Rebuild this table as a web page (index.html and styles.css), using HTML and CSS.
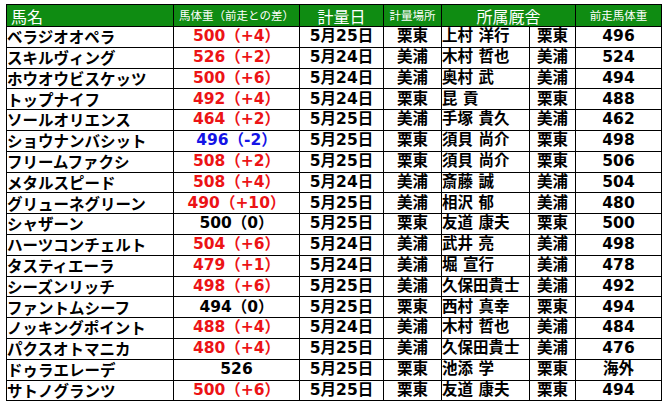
FILE: index.html
```html
<!DOCTYPE html>
<html lang="ja">
<head>
<meta charset="utf-8">
<title>馬体重</title>
<link rel="stylesheet" href="styles.css">
</head>
<body>
<div class="wrap">
<table class="sheet">
  <colgroup>
    <col class="c-name"><col class="c-wt"><col class="c-date"><col class="c-place"><col class="c-trainer"><col class="c-region"><col class="c-prev">
  </colgroup>
  <thead>
    <tr class="head">
      <th class="h-name">馬名</th>
      <th class="h-small">馬体重（前走との差）</th>
      <th class="h-big">計量日</th>
      <th class="h-small">計量場所</th>
      <th class="h-mid" colspan="2">所属厩舎</th>
      <th class="h-small">前走馬体重</th>
    </tr>
  </thead>
  <tbody>
    <tr><td class="name">ベラジオオペラ</td><td class="wt up">500（+4）</td><td class="ctr">5月25日</td><td class="ctr">栗東</td><td class="trainer">上村 洋行</td><td class="ctr">栗東</td><td class="ctr">496</td></tr>
    <tr><td class="name">スキルヴィング</td><td class="wt up">526（+2）</td><td class="ctr">5月24日</td><td class="ctr">美浦</td><td class="trainer">木村 哲也</td><td class="ctr">美浦</td><td class="ctr">524</td></tr>
    <tr><td class="name">ホウオウビスケッツ</td><td class="wt up">500（+6）</td><td class="ctr">5月24日</td><td class="ctr">美浦</td><td class="trainer">奥村 武</td><td class="ctr">美浦</td><td class="ctr">494</td></tr>
    <tr><td class="name">トップナイフ</td><td class="wt up">492（+4）</td><td class="ctr">5月24日</td><td class="ctr">栗東</td><td class="trainer">昆 貢</td><td class="ctr">栗東</td><td class="ctr">488</td></tr>
    <tr><td class="name">ソールオリエンス</td><td class="wt up">464（+2）</td><td class="ctr">5月25日</td><td class="ctr">美浦</td><td class="trainer">手塚 貴久</td><td class="ctr">美浦</td><td class="ctr">462</td></tr>
    <tr><td class="name">ショウナンバシット</td><td class="wt down">496（-2）</td><td class="ctr">5月25日</td><td class="ctr">栗東</td><td class="trainer">須貝 尚介</td><td class="ctr">栗東</td><td class="ctr">498</td></tr>
    <tr><td class="name">フリームファクシ</td><td class="wt up">508（+2）</td><td class="ctr">5月25日</td><td class="ctr">栗東</td><td class="trainer">須貝 尚介</td><td class="ctr">栗東</td><td class="ctr">506</td></tr>
    <tr><td class="name">メタルスピード</td><td class="wt up">508（+4）</td><td class="ctr">5月24日</td><td class="ctr">美浦</td><td class="trainer">斎藤 誠</td><td class="ctr">美浦</td><td class="ctr">504</td></tr>
    <tr><td class="name">グリューネグリーン</td><td class="wt up">490（+10）</td><td class="ctr">5月25日</td><td class="ctr">美浦</td><td class="trainer">相沢 郁</td><td class="ctr">美浦</td><td class="ctr">480</td></tr>
    <tr><td class="name">シャザーン</td><td class="wt">500（0）</td><td class="ctr">5月25日</td><td class="ctr">栗東</td><td class="trainer">友道 康夫</td><td class="ctr">栗東</td><td class="ctr">500</td></tr>
    <tr><td class="name">ハーツコンチェルト</td><td class="wt up">504（+6）</td><td class="ctr">5月24日</td><td class="ctr">美浦</td><td class="trainer">武井 亮</td><td class="ctr">美浦</td><td class="ctr">498</td></tr>
    <tr><td class="name">タスティエーラ</td><td class="wt up">479（+1）</td><td class="ctr">5月24日</td><td class="ctr">美浦</td><td class="trainer">堀 宣行</td><td class="ctr">美浦</td><td class="ctr">478</td></tr>
    <tr><td class="name">シーズンリッチ</td><td class="wt up">498（+6）</td><td class="ctr">5月25日</td><td class="ctr">美浦</td><td class="trainer">久保田貴士</td><td class="ctr">美浦</td><td class="ctr">492</td></tr>
    <tr><td class="name">ファントムシーフ</td><td class="wt">494（0）</td><td class="ctr">5月25日</td><td class="ctr">栗東</td><td class="trainer">西村 真幸</td><td class="ctr">栗東</td><td class="ctr">494</td></tr>
    <tr><td class="name">ノッキングポイント</td><td class="wt up">488（+4）</td><td class="ctr">5月24日</td><td class="ctr">美浦</td><td class="trainer">木村 哲也</td><td class="ctr">美浦</td><td class="ctr">484</td></tr>
    <tr><td class="name">パクスオトマニカ</td><td class="wt up">480（+4）</td><td class="ctr">5月25日</td><td class="ctr">美浦</td><td class="trainer">久保田貴士</td><td class="ctr">美浦</td><td class="ctr">476</td></tr>
    <tr><td class="name">ドゥラエレーデ</td><td class="wt">526</td><td class="ctr">5月25日</td><td class="ctr">栗東</td><td class="trainer">池添 学</td><td class="ctr">栗東</td><td class="ctr">海外</td></tr>
    <tr><td class="name">サトノグランツ</td><td class="wt up">500（+6）</td><td class="ctr">5月25日</td><td class="ctr">栗東</td><td class="trainer">友道 康夫</td><td class="ctr">栗東</td><td class="ctr">494</td></tr>
  </tbody>
</table>
</div>
</body>
</html>
```

FILE: styles.css
```css
html, body {
  margin: 0;
  padding: 0;
  background: #ffffff;
}

.wrap {
  padding: 4px 0 0 6px;
}

.sheet {
  border-collapse: collapse;
  table-layout: fixed;
  width: 655px;
  font-family: "DejaVu Sans", "Noto Sans CJK JP", sans-serif;
  color: #000;
}

.c-name { width: 167px; }
.c-wt { width: 126px; }
.c-date { width: 84px; }
.c-place { width: 58px; }
.c-trainer { width: 88px; }
.c-region { width: 46px; }
.c-prev { width: 86px; }

.sheet th,
.sheet td {
  border: 1px solid #000;
  padding: 0;
  line-height: 1;
  vertical-align: middle;
  white-space: nowrap;
  overflow: hidden;
}

.head {
  height: 22px;
}

.head th {
  background: #0f8c12;
  color: #ffffff;
  font-family: "Noto Sans CJK JP", sans-serif;
  font-weight: 400;
  text-align: center;
}

.head .h-name {
  text-align: left;
  padding-left: 4px;
  font-size: 16px;
}

.head .h-small {
  font-size: 11.5px;
}

.head .h-big {
  font-size: 16px;
}

.head .h-mid {
  font-size: 16px;
}

tbody tr {
  height: 20.8px;
}

tbody td {
  font-size: 15.5px;
  font-weight: 700;
}

.name {
  padding-left: 5px;
  font-family: "Noto Sans CJK JP", sans-serif;
}

.trainer {
  padding-left: 3px;
}

.ctr {
  text-align: center;
}

.wt {
  text-align: center;
  padding-left: 8px;
}

.up {
  color: #ec1316;
}

.down {
  color: #1414e6;
}
```
